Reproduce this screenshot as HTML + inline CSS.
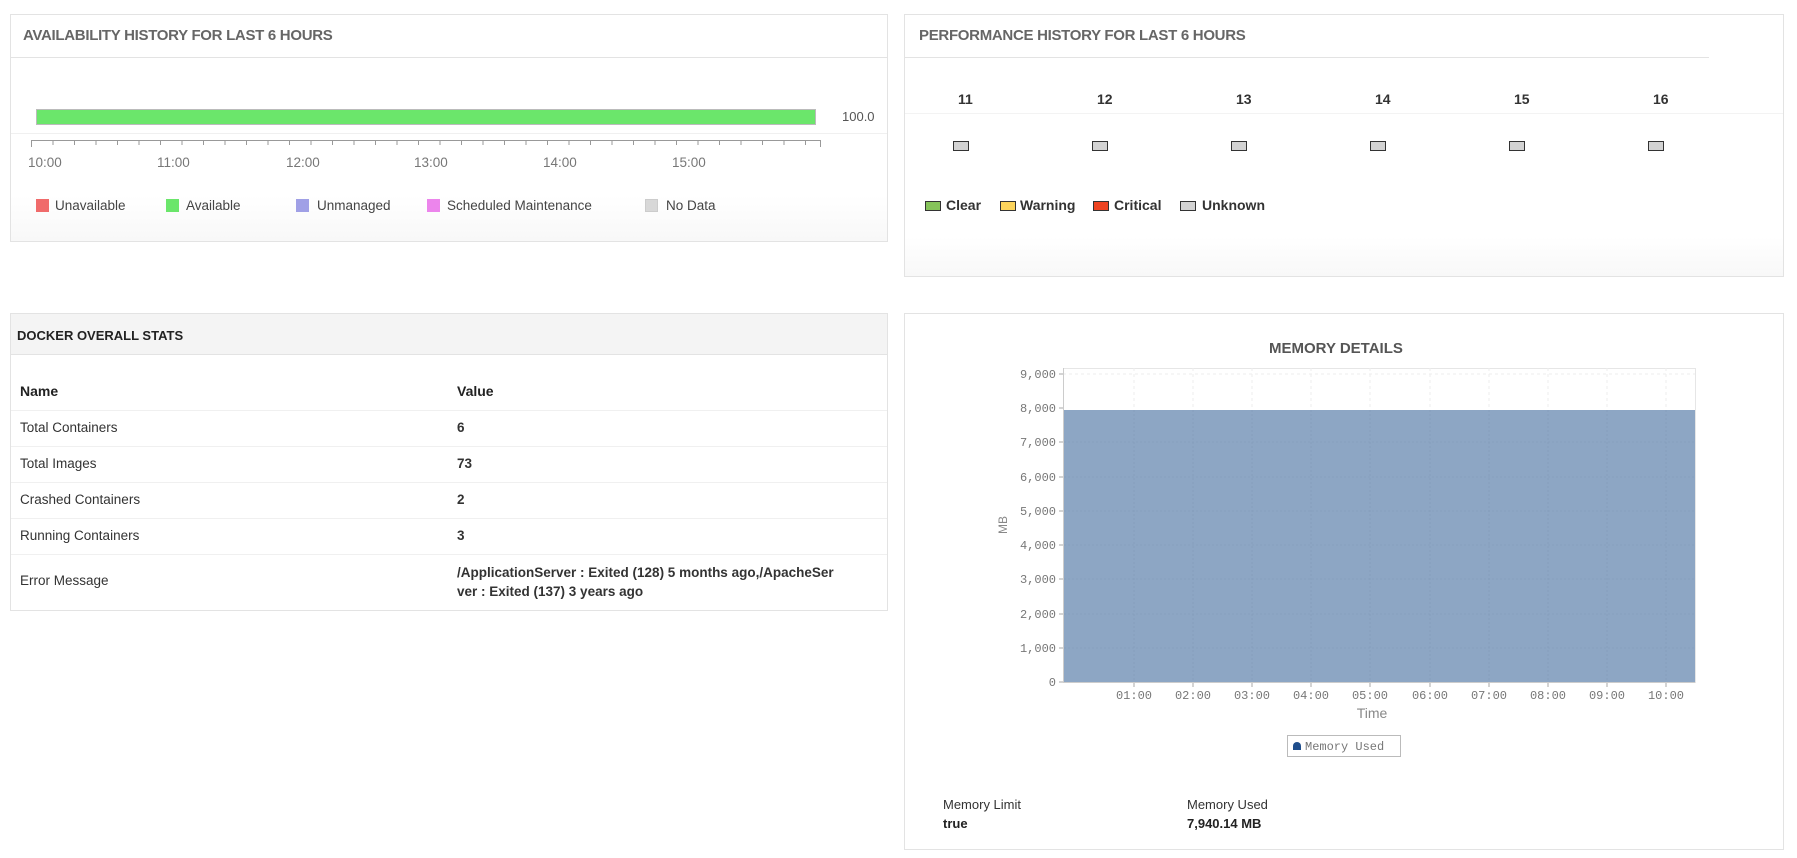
<!DOCTYPE html>
<html><head><meta charset="utf-8"><style>
*{box-sizing:border-box;margin:0;padding:0}
body{width:1797px;height:858px;background:#fff;font-family:"Liberation Sans",sans-serif;color:#333;position:relative;overflow:hidden}
.p{position:absolute;border:1px solid #e3e3e3;background:#fff}
.a{position:absolute;white-space:nowrap}
.t{font-weight:bold;font-size:15px;color:#666;letter-spacing:-0.3px}
.sw{position:absolute;width:13px;height:13px}
.lg{font-size:13.5px;color:#444}
.bx{position:absolute;width:16px;height:10px;background:#d3d3d3;border:1px solid #333}
.pl{font-size:14px;font-weight:bold;color:#333}
.row{position:absolute;border-top:1px solid #f0f0f0}
.tc{font-size:13.5px;color:#333}
</style></head><body>

<!-- Availability -->
<div class="p" style="left:10px;top:14px;width:878px;height:228px;background:linear-gradient(#fff 80%,#f8f8f8)"></div>
<div class="a" style="left:11px;top:57px;width:876px;border-top:1px solid #e3e3e3"></div>
<div class="a t" style="left:23px;top:27px">AVAILABILITY HISTORY FOR LAST 6 HOURS</div>
<div class="a" style="left:36px;top:109px;width:780px;height:16px;background:#6be66b;border:1px solid #bbb"></div>
<div class="a" style="left:842px;top:109px;font-size:13px;color:#555">100.0</div>
<div class="a" style="left:11px;top:133px;width:876px;border-top:1px solid #f0f0f0"></div>
<div class="a" style="left:31px;top:140px;width:790px;border-top:1px solid #999"></div>
<svg class="a" style="left:0;top:140px" width="830" height="8">
<g stroke="#999" stroke-width="1">
<path d="M31.5 0v7M53 0v5M74.5 0v5M96 0v5M117.5 0v5M139 0v5M160.5 0v5M182 0v5M203.5 0v5M225 0v5M246.5 0v5M268 0v5M289.5 0v5M311 0v5M332.5 0v5M354 0v5M375.5 0v5M397 0v5M418.5 0v5M440 0v5M461.5 0v5M483 0v5M504.5 0v5M526 0v5M547.5 0v5M569 0v5M590.5 0v5M612 0v5M633.5 0v5M655 0v5M676.5 0v5M698 0v5M719.5 0v5M741 0v5M762.5 0v5M784 0v5M805.5 0v5M820.5 0v7"/></g></svg>
<div class="a lg" style="left:28px;top:155px;color:#777">10:00</div>
<div class="a lg" style="left:157px;top:155px;color:#777">11:00</div>
<div class="a lg" style="left:286px;top:155px;color:#777">12:00</div>
<div class="a lg" style="left:414px;top:155px;color:#777">13:00</div>
<div class="a lg" style="left:543px;top:155px;color:#777">14:00</div>
<div class="a lg" style="left:672px;top:155px;color:#777">15:00</div>
<div class="sw" style="left:36px;top:199px;background:#f06b6b"></div><div class="a lg" style="left:55px;top:198px">Unavailable</div>
<div class="sw" style="left:166px;top:199px;background:#6be66b"></div><div class="a lg" style="left:186px;top:198px">Available</div>
<div class="sw" style="left:296px;top:199px;background:#a0a0e6"></div><div class="a lg" style="left:317px;top:198px">Unmanaged</div>
<div class="sw" style="left:427px;top:199px;background:#ec85ec"></div><div class="a lg" style="left:447px;top:198px">Scheduled Maintenance</div>
<div class="sw" style="left:645px;top:199px;background:#d8d8d8;border:1px solid #ccc"></div><div class="a lg" style="left:666px;top:198px">No Data</div>

<!-- Performance -->
<div class="p" style="left:904px;top:14px;width:880px;height:263px;background:linear-gradient(#fff 85%,#f8f8f8)"></div>
<div class="a" style="left:905px;top:57px;width:804px;border-top:1px solid #e3e3e3"></div>
<div class="a t" style="left:919px;top:27px">PERFORMANCE HISTORY FOR LAST 6 HOURS</div>
<div class="a" style="left:905px;top:113px;width:878px;border-top:1px solid #f3f3f3"></div>
<div class="a pl" style="left:958px;top:91px">11</div>
<div class="a pl" style="left:1097px;top:91px">12</div>
<div class="a pl" style="left:1236px;top:91px">13</div>
<div class="a pl" style="left:1375px;top:91px">14</div>
<div class="a pl" style="left:1514px;top:91px">15</div>
<div class="a pl" style="left:1653px;top:91px">16</div>
<div class="bx" style="left:953px;top:141px"></div>
<div class="bx" style="left:1092px;top:141px"></div>
<div class="bx" style="left:1231px;top:141px"></div>
<div class="bx" style="left:1370px;top:141px"></div>
<div class="bx" style="left:1509px;top:141px"></div>
<div class="bx" style="left:1648px;top:141px"></div>
<div class="bx" style="left:925px;top:201px;background:#86c35a"></div><div class="a pl" style="left:946px;top:197px">Clear</div>
<div class="bx" style="left:1000px;top:201px;background:#fcd45c"></div><div class="a pl" style="left:1020px;top:197px">Warning</div>
<div class="bx" style="left:1093px;top:201px;background:#ee4422"></div><div class="a pl" style="left:1114px;top:197px">Critical</div>
<div class="bx" style="left:1180px;top:201px"></div><div class="a pl" style="left:1202px;top:197px">Unknown</div>

<!-- Docker -->
<div class="p" style="left:10px;top:313px;width:878px;height:298px"></div>
<div class="a" style="left:11px;top:314px;width:876px;height:41px;background:#f4f4f4;border-bottom:1px solid #e3e3e3"></div>
<div class="a" style="left:17px;top:328px;font-size:13px;font-weight:bold;color:#222">DOCKER OVERALL STATS</div>
<div class="a" style="left:20px;top:383px;font-size:14px;font-weight:bold;color:#222">Name</div>
<div class="a" style="left:457px;top:383px;font-size:14px;font-weight:bold;color:#222">Value</div>
<div class="row" style="left:11px;width:876px;top:410px"></div>
<div class="row" style="left:11px;width:876px;top:446px"></div>
<div class="row" style="left:11px;width:876px;top:482px"></div>
<div class="row" style="left:11px;width:876px;top:518px"></div>
<div class="row" style="left:11px;width:876px;top:554px"></div>
<div class="a tc" style="left:20px;top:420px">Total Containers</div><div class="a tc" style="left:457px;top:420px;font-weight:bold">6</div>
<div class="a tc" style="left:20px;top:456px">Total Images</div><div class="a tc" style="left:457px;top:456px;font-weight:bold">73</div>
<div class="a tc" style="left:20px;top:492px">Crashed Containers</div><div class="a tc" style="left:457px;top:492px;font-weight:bold">2</div>
<div class="a tc" style="left:20px;top:528px">Running Containers</div><div class="a tc" style="left:457px;top:528px;font-weight:bold">3</div>
<div class="a tc" style="left:20px;top:573px">Error Message</div>
<div class="a tc" style="left:457px;top:563px;font-weight:bold;line-height:19px;font-size:13.5px">/ApplicationServer : Exited (128) 5 months ago,/ApacheSer<br>ver : Exited (137) 3 years ago</div>

<!-- Memory -->
<div class="p" style="left:904px;top:313px;width:880px;height:537px"></div>
<div class="a" style="left:1269px;top:340px;font-size:15px;font-weight:bold;color:#555">MEMORY DETAILS</div>
<svg class="a" style="left:0;top:0" width="1797" height="858">
<rect x="1063.5" y="368.5" width="632" height="314" fill="#fff" stroke="#e6e6e6"/>
<g stroke="#eee" stroke-dasharray="3,3">
<path d="M1063 374H1695M1134 368V682M1193 368V682M1252 368V682M1311 368V682M1370 368V682M1430 368V682M1489 368V682M1548 368V682M1607 368V682M1666 368V682"/></g>
<rect x="1064" y="410" width="631" height="272" fill="#8da6c4"/>
<g stroke="#8199b8" stroke-dasharray="2,2" stroke-width="0.6">
<path d="M1064 442H1695M1064 477H1695M1064 511H1695M1064 545H1695M1064 579H1695M1064 614H1695M1064 648H1695M1134 410V682M1193 410V682M1252 410V682M1311 410V682M1370 410V682M1430 410V682M1489 410V682M1548 410V682M1607 410V682M1666 410V682"/></g>
<path d="M1063.5 368V682.5H1695" stroke="#ccc" fill="none"/>
<g stroke="#aaa"><path d="M1059 374h4M1059 408h4M1059 442h4M1059 477h4M1059 511h4M1059 545h4M1059 579h4M1059 614h4M1059 648h4M1059 682h4M1134 683v4M1193 683v4M1252 683v4M1311 683v4M1370 683v4M1430 683v4M1489 683v4M1548 683v4M1607 683v4M1666 683v4"/></g>
<g font-family="Liberation Mono,monospace" font-size="12" fill="#777" text-anchor="end">
<text x="1056" y="378">9,000</text><text x="1056" y="412">8,000</text><text x="1056" y="446">7,000</text><text x="1056" y="481">6,000</text><text x="1056" y="515">5,000</text><text x="1056" y="549">4,000</text><text x="1056" y="583">3,000</text><text x="1056" y="618">2,000</text><text x="1056" y="652">1,000</text><text x="1056" y="686">0</text></g>
<g font-family="Liberation Mono,monospace" font-size="12" fill="#777" text-anchor="middle">
<text x="1134" y="699">01:00</text><text x="1193" y="699">02:00</text><text x="1252" y="699">03:00</text><text x="1311" y="699">04:00</text><text x="1370" y="699">05:00</text><text x="1430" y="699">06:00</text><text x="1489" y="699">07:00</text><text x="1548" y="699">08:00</text><text x="1607" y="699">09:00</text><text x="1666" y="699">10:00</text></g>
<text x="1372" y="718" font-size="14" fill="#888" text-anchor="middle">Time</text>
<text x="1007" y="525" font-size="12" fill="#888" text-anchor="middle" transform="rotate(-90 1007 525)">MB</text>
<rect x="1287.5" y="735.5" width="113" height="21" fill="#fff" stroke="#bbb"/>
<path d="M1293 750v-4a4 4 0 0 1 8 0v4z" fill="#1f4e8c"/>
<text x="1305" y="750" font-family="Liberation Mono,monospace" font-size="12" fill="#777">Memory Used</text>
</svg>
<div class="a" style="left:943px;top:797px;font-size:13px;color:#333">Memory Limit</div>
<div class="a" style="left:943px;top:816px;font-size:13px;font-weight:bold;color:#222">true</div>
<div class="a" style="left:1187px;top:797px;font-size:13px;color:#333">Memory Used</div>
<div class="a" style="left:1187px;top:816px;font-size:13px;font-weight:bold;color:#222">7,940.14 MB</div>
</body></html>
